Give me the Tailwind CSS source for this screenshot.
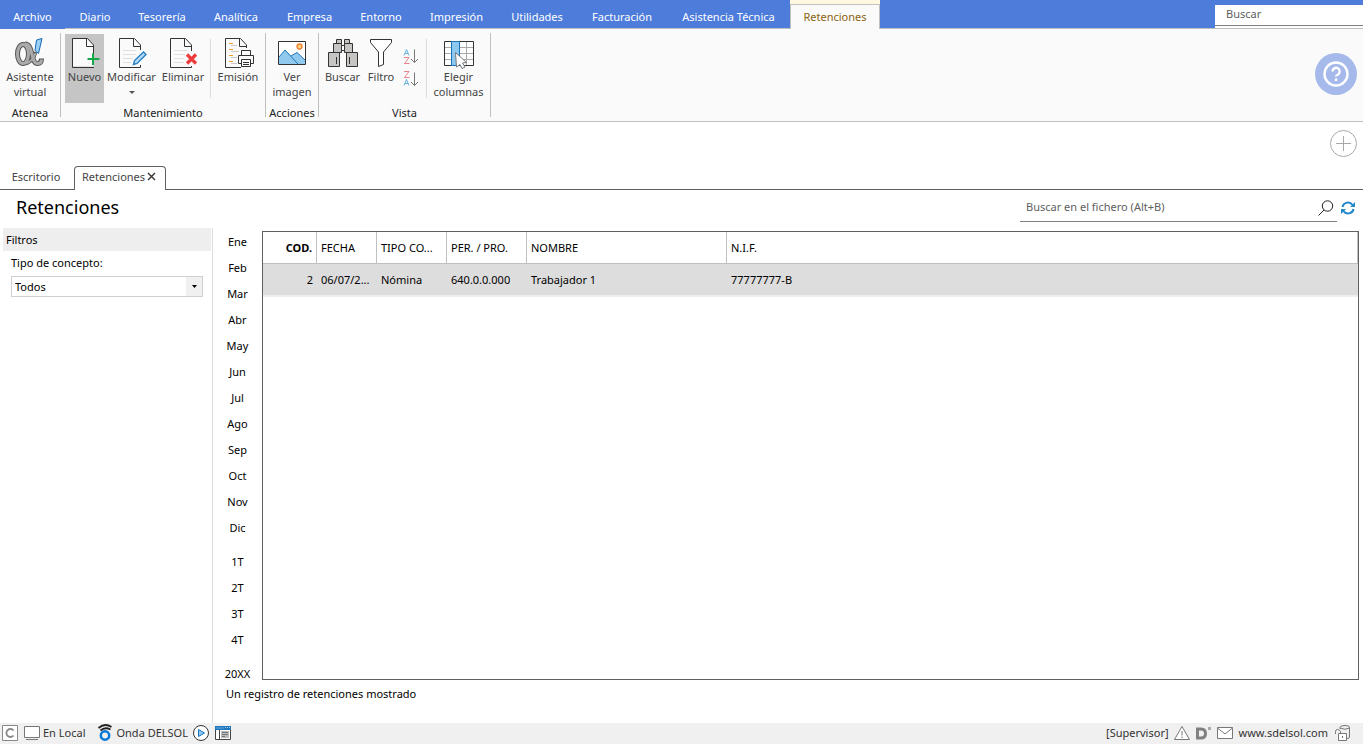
<!DOCTYPE html>
<html lang="es">
<head>
<meta charset="utf-8">
<title>Retenciones</title>
<script src="https://cdn.jsdelivr.net/npm/@tailwindcss/browser@4"></script>
</head>
<body class="flex min-h-screen flex-col bg-white font-['Noto_Sans','Open_Sans',sans-serif] text-[11px] leading-[15px] text-black">

<!-- Menu bar -->
<header class="flex h-[29px] border-b border-[#c0c0c0] bg-[#4d7cdb]">
  <nav class="flex flex-1 text-white">
    <button class="-mb-px w-[65px] bg-[#4d7cdb] pt-1">Archivo</button>
    <button class="w-[60px] pt-1">Diario</button>
    <button class="w-[74px] pt-1">Tesorería</button>
    <button class="w-[74px] pt-1">Analítica</button>
    <button class="w-[73px] pt-1">Empresa</button>
    <button class="w-[70px] pt-1">Entorno</button>
    <button class="w-[81px] pt-1">Impresión</button>
    <button class="w-[80px] pt-1">Utilidades</button>
    <button class="w-[90px] pt-1">Facturación</button>
    <button class="w-[123px] pt-1">Asistencia Técnica</button>
    <div class="-mb-px flex w-[90px] flex-col bg-[#fff8e1] pt-1">
      <button class="flex-1 border border-b-0 border-[#c0c0c0] bg-[#fafafa] pb-0.5 text-[#8a6410]">Retenciones</button>
    </div>
  </nav>
  <div class="mt-[5px] w-[148px] bg-white">
    <input aria-label="Buscar" placeholder="Buscar" class="block h-[21px] w-full border-b border-[#808080] bg-white pr-2 pb-1 pl-[11px] outline-none placeholder:text-[#606060]">
  </div>
</header>

<!-- Ribbon -->
<section class="flex h-[93px] items-start border-b border-[#c0c0c0] bg-[#fafafa] pt-1 text-[#444]">
  <div class="flex h-[84px] w-[61px] flex-col border-r border-[#c0c0c0] pt-px *:shrink-0">
    <button class="flex h-[69px] flex-col items-center pt-1">
      <svg class="-mb-px size-8 shrink-0" viewBox="0 0 32 32" fill="none"><g stroke="#555" stroke-width="5"><ellipse cx="9" cy="16" rx="5.500" ry="9.500"/><path d="M11 6C20 6 16 25.500 23.500 25.500Q27.500 25.500 27.500 20.500"/><path d="M21.500 14Q19 23 12 25.500" stroke-width="4"/></g><g stroke="#ababab" stroke-width="3"><ellipse cx="9" cy="16" rx="5.500" ry="9.500"/><path d="M11 6C20 6 16 25.500 23.500 25.500Q27.500 25.500 27.500 21.500"/><path d="M21.500 15Q19 23 12 25.500" stroke-width="2"/></g><path d="M22.500 2L28 .500L24.500 15.500L21 12.500Z" fill="#9bd0f5" stroke="#1769b0"/></svg>
      <span>Asistente<br>virtual</span>
    </button>
    <div class="mt-0.5 text-center text-[#222]">Atenea</div>
  </div>

  <div class="flex h-[84px] w-[205px] flex-col border-r border-[#c0c0c0] pt-px *:shrink-0">
    <div class="flex h-[69px] pl-1">
      <button class="flex w-[39px] flex-col items-center bg-[#c5c5c5] pt-1">
        <svg class="-mb-px size-8 shrink-0" viewBox="0 0 32 32" fill="none"><path d="M3.500.500H18.500L24.500 7V28.500H3.500Z" fill="#fafafa"/><path d="M24.500 16V7L18.500.500H3.500V29.500H25M17.500.500V8.500H24.500" stroke="#333"/><path d="M24 15.500V27M18.500 21H30.500" stroke="#14a84b" stroke-width="2"/></svg>
        <span>Nuevo</span>
      </button>
      <button class="flex w-[55px] flex-col items-center pt-1">
        <svg class="-mb-px size-8 shrink-0" viewBox="0 0 32 32" fill="none"><path d="M24.500 12V7L18.500.500H3.500V29.500H24.500V27M17.500.500V8.500H24.500" stroke="#333"/><path d="M7 12.500H20M7 16.500H20M7 20.500H17M7 24.500H15" stroke="#e0e0e0"/><path d="M17.500 26.500L18.500 22.500L27.500 14L30 16.500L21 25.500Z" fill="#b4daf5" stroke="#2580c3" stroke-width="1.400"/></svg>
        <span>Modificar</span>
        <svg class="mt-1 h-2 w-1.5" viewBox="0 0 6 8"><path d="M0 3H6L3 6Z" fill="#555"/></svg>
      </button>
      <button class="flex w-[48px] flex-col items-center pt-1">
        <svg class="-mb-px size-8 shrink-0" viewBox="0 0 32 32" fill="none"><path d="M24.500 13V7L18.500.500H3.500V29.500H24.500V28M17.500.500V8.500H24.500" stroke="#333"/><path d="M7 12.500H20M7 16.500H18M7 20.500H17M7 24.500H17" stroke="#e0e0e0"/><path d="M20 16.500L29 25.500M29 16.500L20 25.500" stroke="#ee3b3b" stroke-width="3.200"/></svg>
        <span>Eliminar</span>
      </button>
      <div class="mt-[5px] ml-[3px] h-[59px] border-l border-[#dcdcdc]"></div>
      <button class="flex w-[54px] flex-col items-center pt-1">
        <svg class="-mb-px size-8 shrink-0" viewBox="0 0 32 32" fill="none"><path d="M24.500 10V7L18.500.500H3.500V29.500H19M17.500.500V8.500H24.500" stroke="#333"/><path d="M7 5.500H11M7 11.500H11M7 17.500H11M7 23.500H11" stroke="#f09a28"/><path d="M9 7.500H15M9 13.500H17M9 19.500H15M9 25.500H15" stroke="#c8c8c8"/><path d="M19.500 17.500V12.500H28.500V17.500M19.500 25.500H16.500V17.500H31.500V25.500H28.500M19.500 21.500H28.500V28.500H19.500ZM21 24.500H27M21 26.500H27" stroke="#333" fill="#fafafa"/></svg>
        <span>Emisión</span>
      </button>
    </div>
    <div class="mt-0.5 text-center text-[#222]">Mantenimiento</div>
  </div>

  <div class="flex h-[84px] w-[53px] flex-col border-r border-[#c0c0c0] pt-px *:shrink-0">
    <button class="flex h-[69px] flex-col items-center pt-1">
      <svg class="-mb-px size-8 shrink-0" viewBox="0 0 32 32"><path d="M2.500 3.500H29.500V26.500H2.500Z" fill="#fff"/><path d="M3 19L9 12L15.500 18L21 14.500L29 22V26H3Z" fill="#91c8ee"/><path d="M3 19L9 12L22 26M15 18L21 14.500L29 22" fill="none" stroke="#1c75b8"/><circle cx="23.500" cy="8.500" r="2.500" fill="#fbd27c" stroke="#ef7f31" stroke-width="1.300"/><path d="M2.500 3.500H29.500V26.500H2.500Z" fill="none" stroke="#333"/></svg>
      <span>Ver<br>imagen</span>
    </button>
    <div class="mt-0.5 text-center text-[#222]">Acciones</div>
  </div>

  <div class="flex h-[84px] w-[172px] flex-col border-r border-[#c0c0c0] pt-px *:shrink-0">
    <div class="flex h-[69px] pl-1">
      <button class="flex w-[39px] flex-col items-center pt-1">
        <svg class="-mb-px size-8 shrink-0" viewBox="0 0 32 32" stroke="#333"><path d="M9.500 1.500H14.500V5.500H9.500ZM17.500 1.500H22.500V5.500H17.500ZM6.500 5.500H14.500V14.500H6.500ZM17.500 5.500H25.500V14.500H17.500ZM1.500 14.500H12.500V28.500H1.500ZM19.500 14.500H30.500V28.500H19.500Z" fill="#c6c5c4"/><path d="M14.500 7.500H17.500V12.500H14.500Z" fill="#fff"/><path d="M9.500 19V26M22.500 19V26"/></svg>
        <span>Buscar</span>
      </button>
      <button class="flex w-[38px] flex-col items-center pt-1">
        <svg class="-mb-px size-8 shrink-0" viewBox="0 0 32 32"><path d="M5.500 1.500H26.500V4.500L18.500 14V26.500L13.500 28.500V14L5.500 4.500Z" fill="#fff" stroke="#333"/></svg>
        <span>Filtro</span>
      </button>
      <div class="flex w-[22px] flex-col items-center gap-1 pt-[13px]">
        <button aria-label="Orden ascendente"><svg class="h-[19px] w-4" viewBox="0 0 16 19" fill="none"><path d="M1 8.500L3.500 2.500L6 8.500M2 6.500H5" stroke="#67b0dc"/><path d="M1 10.500H6L1.500 16.500H6.500" stroke="#e8828c"/><path d="M11.500 2.500V15.500M8 12L11.500 15.500L15 12" stroke="#777"/></svg></button>
        <button aria-label="Orden descendente"><svg class="h-[19px] w-4" viewBox="0 0 16 19" fill="none"><path d="M1 1.500H6L1.500 7.500H6.500" stroke="#e8828c"/><path d="M1 15.500L3.500 9.500L6 15.500M2 13.500H5" stroke="#67b0dc"/><path d="M11.500 2.500V15.500M8 12L11.500 15.500L15 12" stroke="#777"/></svg></button>
      </div>
      <div class="mt-[5px] ml-1 h-[59px] border-l border-[#dcdcdc]"></div>
      <button class="flex flex-1 flex-col items-center pt-1">
        <svg class="-mb-px size-8 shrink-0" viewBox="0 0 32 32" fill="none"><path d="M1.500 3.500H30.500V27.500H1.500Z" fill="#fff"/><path d="M2 9.500H30M2 15.500H30M2 21.500H30M23.500 4V27" stroke="#aaa"/><path d="M1.500 3.500H30.500V27.500H1.500Z" stroke="#333"/><path d="M8.500 3.500H16.500V27.500H8.500Z" fill="#8dc8ef" stroke="#1873b8"/><path d="M12.500 14.500L23.500 24.500L19.500 25L22 29L19 30.500L17 26.500L13.500 29Z" fill="#fff" stroke="#777"/></svg>
        <span>Elegir<br>columnas</span>
      </button>
    </div>
    <div class="mt-0.5 text-center text-[#222]">Vista</div>
  </div>

  <button aria-label="Ayuda" class="mt-5 mr-1.5 ml-auto">
    <svg class="size-[42px]" viewBox="0 0 42 42" fill="none"><circle cx="21" cy="21" r="21" fill="#a5b9ea"/><circle cx="21" cy="21" r="11.500" stroke="#fff" stroke-width="2.400"/><path d="M17.500 18.500A3.600 3.600 0 1 1 23 21.500Q21 22.500 21 23.500" stroke="#fff" stroke-width="2.400"/><path d="M21 25.500V28" stroke="#fff" stroke-width="2.400"/></svg>
  </button>
</section>

<!-- Document tabs -->
<div class="flex h-[68px] items-end justify-between border-b border-[#606060] text-[#444]">
  <div class="flex items-end">
    <button class="h-6 w-[74px] pr-0.5 pb-0.5">Escritorio</button>
    <div class="-mb-px flex h-6 w-[92px] items-center gap-0.5 rounded-t-[4px] border border-b-0 border-[#606060] bg-white pb-1 pl-[7px]">
      <button>Retenciones</button>
      <button aria-label="Cerrar"><svg class="size-[9px]" viewBox="0 0 9 9"><path d="M1 1L8 8M8 1L1 8" stroke="#333" stroke-width="1.400"/></svg></button>
    </div>
  </div>
  <button aria-label="Añadir" class="mr-1.5 mb-8"><svg class="size-[27px]" viewBox="0 0 27 27" fill="none" stroke="#a8a8a8"><circle cx="13.500" cy="13.500" r="13"/><path d="M13.500 6V21M6 13.500H21"/></svg></button>
</div>

<div class="flex h-[38px] items-start justify-between pt-1 pr-2 pl-4">
  <h1 class="pt-px text-[18px] leading-6">Retenciones</h1>
  <div class="flex">
    <label class="flex h-7 w-[317px] items-center border-b border-[#808080] pr-[3px] pl-1.5">
      <input aria-label="Buscar en el fichero" placeholder="Buscar en el fichero (Alt+B)" class="min-w-0 flex-1 pb-0.5 outline-none placeholder:text-[#606060]">
      <svg class="size-4" viewBox="0 0 16 16" fill="none" stroke="#222"><circle cx="9.500" cy="6" r="5.200"/><path d="M6 10L.500 15.500"/></svg>
    </label>
    <button aria-label="Actualizar" class="ml-1 self-start pt-[7px]"><svg class="size-[14px]" viewBox="0 0 14 14" fill="none" stroke="#2288cc" stroke-width="2"><path d="M1.500 6A5.500 5.500 0 0 1 11.500 4M12.500 8A5.500 5.500 0 0 1 2.500 10"/><path d="M14 1V6H9ZM0 13V8H5Z" fill="#2288cc" stroke="none"/></svg></button>
  </div>
</div>

<main class="flex flex-1">
  <aside class="w-[213px] border-r border-[#dcdcdc] pl-[3px]">
    <h2 class="mr-px h-[23px] bg-[#eee] pt-1 pl-[3px]">Filtros</h2>
    <div class="pt-1 pr-[9px] pl-2">
      <label for="tipo" class="block h-[21px]">Tipo de concepto:</label>
      <div class="relative">
        <select id="tipo" class="block h-[21px] w-full appearance-none border border-[#d0d0d0] bg-white pl-[3px]"><option>Todos</option></select>
        <span class="pointer-events-none absolute inset-y-px right-px flex w-4 items-center justify-center bg-[#f0f0f0]"><svg class="h-[3px] w-[5px]" viewBox="0 0 5 3"><path d="M0 0H5L2.500 3Z"/></svg></span>
      </div>
    </div>
  </aside>

  <nav class="flex w-[49px] flex-col gap-2 pb-9">
    <div class="grid auto-rows-[26px]">
      <button>Ene</button><button>Feb</button><button>Mar</button><button>Abr</button><button>May</button><button>Jun</button><button>Jul</button><button>Ago</button><button>Sep</button><button>Oct</button><button>Nov</button><button>Dic</button>
    </div>
    <div class="grid auto-rows-[26px]">
      <button>1T</button><button>2T</button><button>3T</button><button>4T</button>
    </div>
    <button class="h-[26px]">20XX</button>
  </nav>

  <section class="flex min-w-0 flex-1 flex-col pt-[3px] pr-1">
    <div class="flex-1 border border-[#606060]">
      <table class="w-full table-fixed border-separate border-spacing-0 text-left">
        <colgroup><col class="w-[54px]"><col class="w-[60px]"><col class="w-[70px]"><col class="w-[80px]"><col class="w-[200px]"><col></colgroup>
        <thead>
          <tr class="h-8 *:border-r *:border-b *:border-[#c0c0c0] *:pl-1 *:font-normal">
            <th class="pr-1 text-right"><b class="font-bold">COD.</b></th><th>FECHA</th><th>TIPO CO...</th><th>PER. / PRO.</th><th>NOMBRE</th><th>N.I.F.</th>
          </tr>
        </thead>
        <tbody>
          <tr class="h-[33px] bg-[#ddd] *:border-b-2 *:border-[#eee] *:pl-1">
            <td class="pr-1 text-right">2</td><td>06/07/2...</td><td>Nómina</td><td>640.0.0.000</td><td>Trabajador 1</td><td>77777777-B</td>
          </tr>
        </tbody>
      </table>
    </div>
    <p class="-ml-9 h-[43px] pt-1.5">Un registro de retenciones mostrado</p>
  </section>
</main>

<!-- Status bar -->
<footer class="flex h-[21px] items-center justify-between bg-[#f0f0f0] pr-3 pb-0.5 pl-0.5 text-[#333]">
  <div class="flex items-center">
    <svg class="size-4" viewBox="0 0 16 16" fill="none"><path d="M.500.500H15.500V15.500H.500Z" fill="#fff" stroke="#888"/><path d="M11.500 5.500A4 4 0 1 0 11.500 10.500" stroke="#888" stroke-width="1.800"/></svg>
    <svg class="ml-1.5 size-4" viewBox="0 0 16 16"><path d="M.500 1.500H15.500V12.500H.500Z" fill="#fff" stroke="#777"/><path d="M2 14.500H14" stroke="#777"/></svg>
    <span class="ml-[3px]">En Local</span>
    <svg class="ml-3 h-[17px] w-4" viewBox="0 0 16 17" fill="none"><path d="M1.500 4Q8-1.500 14.500 3M3.500 6.500Q8 2.500 13.500 5.500" stroke="#222" stroke-width="1.800"/><circle cx="8" cy="11.500" r="4.200" stroke="#0878d8" stroke-width="2.500"/></svg>
    <span class="ml-[3px]">Onda DELSOL</span>
    <button aria-label="Reproducir" class="ml-[5px]"><svg class="size-4" viewBox="0 0 16 16"><circle cx="8" cy="8" r="7.500" fill="#fff" stroke="#333"/><path d="M5.500 4.500L11.500 8L5.500 11.500Z" fill="#8cc8f2" stroke="#1873b8"/></svg></button>
    <svg class="ml-1.5 size-4" viewBox="0 0 16 16"><path d="M.500 1.500H15.500V14.500H.500Z" fill="#fff" stroke="#444"/><path d="M0 1H16V5H0Z" fill="#2277bb"/><path d="M1 3H9" stroke="#5fa8e0"/><path d="M10 2.500H15" stroke="#9cf" stroke-dasharray="1 1"/><path d="M4.500 5V14" stroke="#444"/><path d="M6 6H14V13H6Z" fill="#bbb"/><path d="M7 7.500H13M7 9.500H13M7 11.500H10" stroke="#777"/></svg>
  </div>
  <div class="flex items-center">
    <span>[Supervisor]</span>
    <svg class="ml-[5px] size-4" viewBox="0 0 16 16" fill="none" stroke="#777"><path d="M8 1.500L15.500 14.500H.500Z" fill="#fff"/><path d="M8 6V10.500M8 11.500V13"/></svg>
    <svg class="ml-[5px] size-4" viewBox="0 0 16 16"><path d="M2.500 4H6Q10.500 4 10.500 8.500Q10.500 13 6 13H2.500Z" fill="none" stroke="#808080" stroke-width="3"/><path d="M13 2H16V5H13Z" fill="#aaa"/></svg>
    <svg class="ml-1.5 size-4" viewBox="0 0 16 16" fill="#fff" stroke="#777"><path d="M.500 2.500H15.500V13.500H.500Z"/><path d="M.500 3L8 9L15.500 3"/></svg>
    <a href="#" class="ml-1.5">www.sdelsol.com</a>
    <svg class="ml-[7px] size-4" viewBox="0 0 16 16" fill="none" stroke="#777"><path d="M5 4V2.500Q5 .500 10 .500T14.500 2.500V12Q14.500 13.500 12 13.500M5 3Q10 5.500 14.500 3"/><path d="M3.500 8.500H11.500V15.500H3.500Z" fill="#fff"/><path d="M.500 9V6.500Q.500 4.500 2.500 4.500T5.500 6.500V8.500M7.500 11V13"/></svg>
  </div>
</footer>
</body>
</html>
